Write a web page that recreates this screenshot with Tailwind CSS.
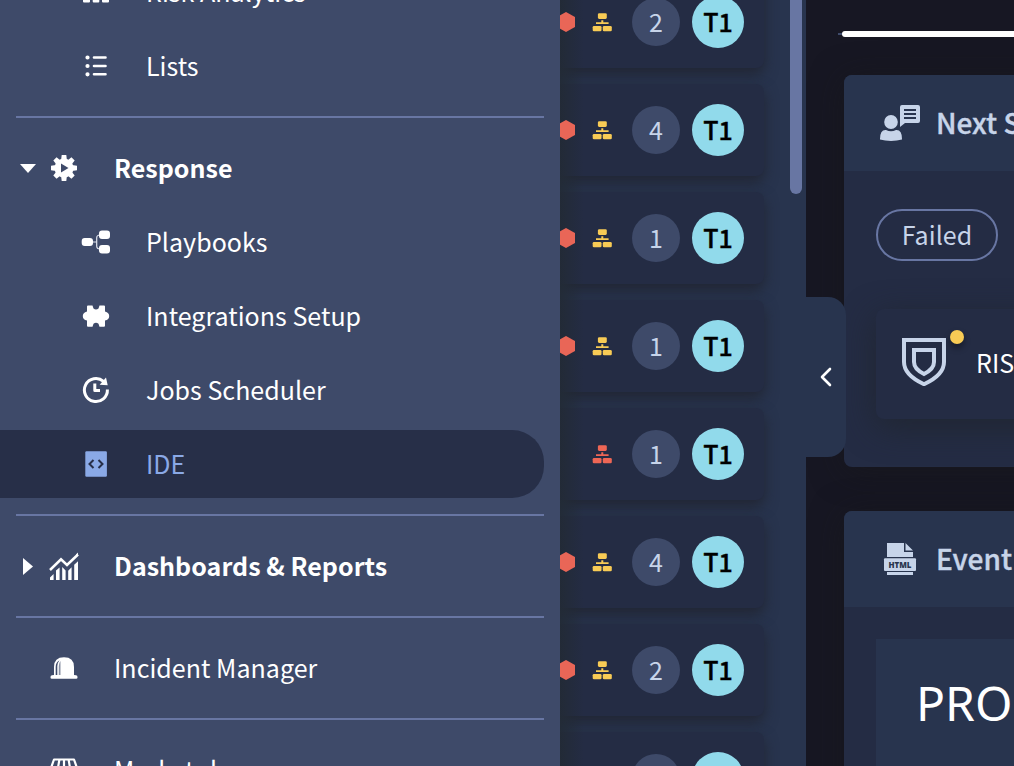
<!DOCTYPE html>
<html lang="en">
<head>
<meta charset="utf-8">
<title>Incidents</title>
<script src="https://cdn.jsdelivr.net/npm/@tailwindcss/browser@4"></script>
</head>
<body class="h-[766px] w-[1014px] overflow-hidden bg-[#171723] font-['Noto_Sans_CJK_SC','Noto_Sans',sans-serif]">
<svg class="hidden">
  <symbol id="org" viewBox="0 0 20 20"><g fill="currentColor"><rect x="5.900" y="1.200" width="8.900" height="5.700" rx="1.300"/><path d="M9.300 8.200h2v2h5.300v1.900H4v-1.900h5.300z"/><rect x=".7" y="13.900" width="8.800" height="5.300" rx="1.300"/><rect x="10.800" y="13.900" width="9" height="5.300" rx="1.300"/></g></symbol>
  <symbol id="hex" viewBox="0 0 18 20"><path fill="#e96657" d="M9 0l9 5v10l-9 5-9-5V5z"/></symbol>
</svg>
<div class="flex h-[766px] w-[1014px] overflow-hidden">

  <nav class="relative z-20 h-full w-[560px] shrink-0 overflow-hidden bg-[#3e4a69] text-[25px] leading-[36px] tracking-[0.03px] text-white">
    <div class="-mt-[42px] flex flex-col">
      <div class="flex h-[68px] items-center pl-[80px]">
        <svg class="size-8" viewBox="0 0 32 32"><path fill="#fff" d="M3 10h7v15.500q0 1-1 1H4q-1 0-1-1zM12.700 6h6.600v19.500q0 1-1 1h-4.600q-1 0-1-1zM22 10h7v15.500q0 1-1 1h-5q-1 0-1-1z"/></svg>
        <span class="mb-0.5 ml-[34px]">Risk Analytics</span>
      </div>
      <div class="mt-1.5 flex h-[68px] items-center pl-[80px]">
        <svg class="size-8" viewBox="0 0 32 32" fill="none" stroke="#fff" stroke-linecap="round"><path stroke-width="2.600" d="M14 7.500h11.500M14 16h11.500M14 24.300h11.500"/><path stroke-width="4.200" d="M7.500 7.500h.01M7.500 16h.01M7.500 24.300h.01"/></svg>
        <span class="mb-0.5 ml-[34px]">Lists</span>
      </div>
      <div class="mx-4 mt-4 h-0.5 bg-[#6876a3]"></div>
      <div class="mt-4 flex h-[68px] items-center pl-[20px]">
        <svg class="h-[9px] w-4" viewBox="0 0 16 9" fill="#fff"><path d="M0 0h16L8 9z"/></svg>
        <svg class="ml-3 size-8" viewBox="0 0 32 32"><g fill="#fff"><circle cx="16" cy="16" r="9.500"/><path d="M13.700 3h4.600l.6 5h-5.800zM13.700 29h4.600l.6-5h-5.800zM3 13.700v4.600l5 .6v-5.800zM29 13.700v4.600l-5 .6v-5.800z"/><path transform="rotate(45 16 16)" d="M13.700 3.200h4.600l.6 5h-5.800zM13.700 28.800h4.600l.6-5h-5.800zM3.200 13.700v4.600l5 .6v-5.800zM28.800 13.700v4.600l-5 .6v-5.800z"/></g><path fill="#3e4a69" d="M13 11.500v9l7.500-4.500z"/></svg>
        <span class="mb-0.5 ml-[34px] font-bold">Response</span>
      </div>
      <div class="mt-1.5 flex h-[68px] items-center pl-[80px]">
        <svg class="size-8" viewBox="0 0 32 32"><path fill="none" stroke="#dfe3ee" stroke-width="1.200" d="M12 16h4.500M21 9h-1q-3.300 0-3.300 3v8q0 3 3.300 3h1"/><g fill="#fff"><rect x="1.700" y="12" width="11.300" height="8" rx="3"/><rect x="19" y="4.500" width="11" height="8.500" rx="3"/><rect x="19" y="19" width="11" height="8.500" rx="3"/></g></svg>
        <span class="mb-0.5 ml-[34px]">Playbooks</span>
      </div>
      <div class="mt-1.5 flex h-[68px] items-center pl-[80px]">
        <svg class="size-8" viewBox="0 0 32 32"><path fill="#fff" d="M8 5.400h4.500l1 3q2.500 2.200 5 0l1-3H24q1 0 1 1v5q4.200 1 4.200 4.600T25 20.600v5.200q0 1-1 1h-4.500l-1-3q-2.500-2.200-5 0l-1 3H8q-1 0-1-1v-5.200Q2.800 19.600 2.800 16T7 11.400v-5q0-1 1-1Z"/></svg>
        <span class="mb-0.5 ml-[34px]">Integrations Setup</span>
      </div>
      <div class="mt-1.5 flex h-[68px] items-center pl-[80px]">
        <svg class="size-8" viewBox="0 0 32 32"><path fill="none" stroke="#fff" stroke-width="3" d="M27.400 15.500A11.500 11.500 0 1 1 23.500 7.400"/><path fill="#fff" d="M26 3.500l1.700 7.800-8-.6z"/><path fill="none" stroke="#fff" stroke-width="3" stroke-linejoin="round" d="M14.800 9.600v6.900h5.200"/></svg>
        <span class="mb-0.5 ml-[34px]">Jobs Scheduler</span>
      </div>
      <div class="mr-4 mt-1.5 flex h-[68px] items-center rounded-r-[32px] bg-[#272f48] pl-[80px] text-[#8aa9e6]">
        <svg class="size-8" viewBox="0 0 32 32"><rect x="5.300" y="3.300" width="21.600" height="25.400" rx="1.200" fill="#8aa9e6"/><path fill="none" stroke="#272f48" stroke-width="2" d="M13.500 12l-4 4 4 4M18.500 12l4 4-4 4"/></svg>
        <span class="mb-0.5 ml-[34px]">IDE</span>
      </div>
      <div class="mx-4 mt-4 h-0.5 bg-[#6876a3]"></div>
      <div class="mt-4 flex h-[68px] items-center pl-[23px]">
        <svg class="h-[17px] w-[10px]" viewBox="0 0 10 17" fill="#fff"><path d="M0 0v17l10-8.500z"/></svg>
        <svg class="ml-[15px] size-8" viewBox="0 0 32 32"><path fill="none" stroke="#fff" stroke-width="2.500" d="M2 20L13 9.300l6 5.700L30 4.500"/><path fill="#fff" d="M28 4.500l2-2v4zM2 27.500l3.600-3.500v6H2zM8 20.500l3.600-3V30H8zM14.200 17l3.400 3.500V30h-3.400zM20.200 20.700l3.400-3.500V30h-3.400zM26.200 14.700l3.800-3.500V30h-3.800z"/></svg>
        <span class="mb-0.5 ml-[34px] font-bold">Dashboards &amp; Reports</span>
      </div>
      <div class="mx-4 mt-4 h-0.5 bg-[#6876a3]"></div>
      <div class="mt-4 flex h-[68px] items-center pl-[48px]">
        <svg class="size-8" viewBox="0 0 32 32"><path fill="#fff" d="M6 23V15Q6 5.300 16 5.300T26 15v8l2 .2q1.500.3 1.500 1.800v.5q0 1.300-1.300 1.300H3.800q-1.300 0-1.300-1.300V25q0-1.500 1.500-1.800z"/><path fill="#3e4a69" d="M7.700 23v-8q0-4.500 3.800-6.700Q9.300 11 9.300 14v9z"/><path fill="#3e4a69" d="M10.800 23v-9q0-3 1.700-5v14z" fill-opacity=".6"/></svg>
        <span class="mb-0.5 ml-[34px]">Incident Manager</span>
      </div>
      <div class="mx-4 mt-4 h-0.5 bg-[#6876a3]"></div>
      <div class="mt-4 flex h-[68px] items-center pl-[48px]">
        <svg class="size-8" viewBox="0 0 32 32" fill="none" stroke="#fff" stroke-width="2.200"><path stroke-linejoin="round" d="M3 14L6 5.500h20L29 14v3H3z"/><path d="M9.800 15l1.600-9.500M16 5.500V16M22.200 15l-1.600-9.500M5 17v11h22V17"/></svg>
        <span class="mb-0.5 ml-[34px]">Marketplace</span>
      </div>
    </div>
  </nav>

  <section class="relative z-10 h-full w-[246px] shrink-0 bg-[#28344e]">
    <div id="cards" class="-mt-6 flex h-[790px] w-[204px] flex-col gap-4"></div>
    <div class="absolute inset-y-0 left-0 w-6 bg-linear-to-r from-[#222a33]/80 to-transparent"></div>
    <div class="absolute right-1 top-0 h-[194px] w-3 rounded-b-full bg-[#6876a3]"></div>
    <div class="absolute left-full top-[297px] flex h-[160px] w-10 items-center justify-center rounded-r-[18px] bg-[#28344e]">
      <svg class="h-[20px] w-3" viewBox="0 0 12 20" fill="none" stroke="#fff" stroke-width="2.600" stroke-linecap="round" stroke-linejoin="round"><path d="M10 2L2 10l8 8"/></svg>
    </div>
  </section>

  <main class="h-full w-[208px] shrink-0 overflow-hidden pl-8">
    <div class="mt-[31px] flex h-1.5 items-center">
      <div class="h-0.5 w-1 bg-[#3f4b6b]"></div>
      <div class="h-1.5 flex-1 rounded-l-full bg-white"></div>
    </div>
    <div class="ml-1.5 mt-[38px] h-[392px] w-[400px] overflow-hidden rounded-lg bg-[#242c44] shadow-[0_4px_32px_rgba(24,24,24,0.5)]">
      <div class="flex h-24 items-center bg-[#28344e] pl-8 text-[#c7d4e9]">
        <svg class="size-12" viewBox="0 0 48 48" fill="currentColor"><ellipse cx="15" cy="23" rx="6.800" ry="7"/><path d="M4 40Q4 30.500 10 31q5 2.500 10 0Q26 30.500 26 40v.6Q21 42 15 42T4 40.600ZM26 6h16q2 0 2 2v14q0 2-2 2H29l-5 4V8q0-2 2-2Z"/><path stroke="#28344e" stroke-width="2" d="M28 11h12M28 15h12M28 19h12"/></svg>
        <span class="mb-0.5 ml-3 whitespace-nowrap text-[28px] font-medium leading-10 [-webkit-text-stroke:0.4px_#c7d4e9]">Next Steps</span>
      </div>
      <div class="ml-8 mt-[38px] flex h-[52px] w-[122px] items-center justify-center rounded-full border-2 border-[#6876a3] pb-0.5 text-[25px] leading-9 tracking-[0.05px] text-[#c7d4e9]">Failed</div>
      <div class="ml-8 mt-[48px] flex h-[110px] items-center rounded-lg bg-[#242c44] pb-1 pl-6 shadow-[0_8px_32px_rgba(32,38,48,0.9)]">
        <div class="relative">
          <svg class="size-12" viewBox="0 0 48 48" fill="none" stroke="#c7d4e9" stroke-width="4"><path d="M4 2h40v22q0 13-20 22.200Q4 37 4 24z"/><path d="M14 12h20v12q0 7-10 12-10-5-10-12z"/></svg>
          <div class="absolute left-[50px] -top-[8px] size-3.5 rounded-full bg-[#f8cb55] shadow-[0_4px_6px_rgba(0,0,0,0.4)]"></div>
        </div>
        <span class="ml-7 whitespace-nowrap text-[25px] leading-9 text-white">RISK</span>
      </div>
    </div>
    <div class="ml-1.5 mt-[44px] h-[392px] w-[400px] overflow-hidden rounded-lg bg-[#242c44] shadow-[0_4px_32px_rgba(24,24,24,0.5)]">
      <div class="flex h-24 items-center bg-[#28344e] pl-8 text-[#c7d4e9]">
        <svg class="size-12" viewBox="0 0 48 48" fill="currentColor"><path d="M11 8h17v9h9v5H11zM29.500 8l7.500 7.500h-7.500zM11 37h26v3H11z"/><rect x="8" y="23.300" width="32" height="12.700" rx="1"/><text x="12.400" y="32.700" font-family="Open Sans" font-size="9" font-weight="800" fill="#28344e" textLength="23" lengthAdjust="spacingAndGlyphs">HTML</text></svg>
        <span class="mb-0.5 ml-3 whitespace-nowrap text-[28px] font-medium leading-10 [-webkit-text-stroke:0.4px_#c7d4e9]">Event</span>
      </div>
      <div class="ml-8 mt-8 h-[300px] bg-[#28344e] pl-10 pt-[30px] font-['Noto_Sans','Open_Sans',sans-serif] text-[48px] leading-[68px] text-white">PROCESS</div>
    </div>
  </main>
</div>
<script>
  const rows = [['2',1],['4',1],['1',1],['1',1],['1',0],['4',1],['2',1],['1',1]];
  document.getElementById('cards').innerHTML = rows.map(([n, hex]) => `
    <div class="flex h-[92px] shrink-0 items-center rounded-r-lg bg-[#242c44] pr-5 shadow-[0_6px_14px_rgba(32,36,48,0.9)]">
      <svg class="relative z-10 -ml-[3px] h-[20px] w-[18px] ${hex ? '' : 'invisible'}"><use href="#hex"/></svg>
      <svg class="ml-[17px] size-5 ${hex ? 'text-[#f8cb55]' : 'text-[#ee6655]'}"><use href="#org"/></svg>
      <div class="ml-5 flex size-12 items-center justify-center rounded-full bg-[#3e4a69] pb-0.5 text-[25px] leading-9 text-[#c7d4e9]">${n}</div>
      <div class="ml-3 flex size-[52px] items-center justify-center rounded-full bg-[#91daeb] pb-0.5 text-[25px] font-medium leading-9 text-black [-webkit-text-stroke:0.4px_black]">T1</div>
    </div>`).join('');
</script>
</body>
</html>
